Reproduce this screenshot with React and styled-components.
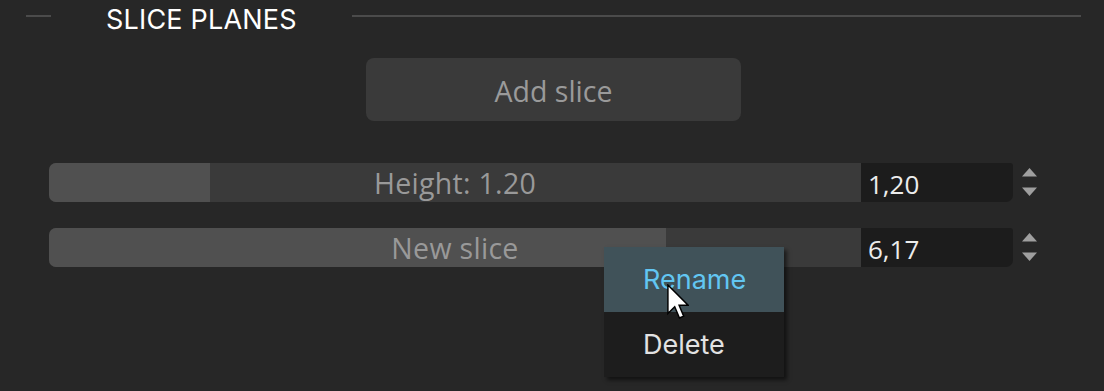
import React from 'react'
import styled, { createGlobalStyle } from 'styled-components';

const GlobalStyle = createGlobalStyle`
    body {
        margin: 0;
        background-color: #272727;
        font-family: "Open Sans", "Liberation Sans", sans-serif;
    }
`

const sliders = [
    { label: 'Height: 1.20', value: '1,20', fill: 161 },
    { label: 'New slice', value: '6,17', fill: 617 },
];

const App = () => {
    return (
        <Page>
            <GlobalStyle />
            <Header>
                <ShortLine />
                <Title>SLICE PLANES</Title>
                <LongLine />
            </Header>
            <ButtonRow>
                <AddButton>Add slice</AddButton>
            </ButtonRow>
            <SliderList>
                {sliders.map((s, i) => (
                    <SliderRow key={i}>
                        <Track>
                            <Fill style={{ width: s.fill }} />
                            <TrackLabel>{s.label}</TrackLabel>
                        </Track>
                        <NumberBox>{s.value}</NumberBox>
                        <Spinner>
                            <svg width="15" height="29" viewBox="0 0 15 29">
                                <polygon points="7.5,0 15,8.5 0,8.5" fill="#9f9f9f" />
                                <polygon points="0,19.5 15,19.5 7.5,28" fill="#9f9f9f" />
                            </svg>
                        </Spinner>
                    </SliderRow>
                ))}
            </SliderList>
            <Menu>
                <MenuItem $active>Rename</MenuItem>
                <MenuItem>Delete</MenuItem>
            </Menu>
            <Cursor width="22" height="35" viewBox="0 0 12 19">
                <path d="M0.5,0.5 L0.5,16 L4.2,12.4 L6.8,18.5 L9.1,17.5 L6.6,11.5 L11.5,11.5 Z"
                    fill="#ffffff" stroke="#000000" strokeWidth="0.8" strokeLinejoin="miter" />
            </Cursor>
        </Page>
    )
}

export default App;


const Page = styled.div`
    position: relative;
    width: 1104px;
    height: 391px;
    overflow: hidden;
    background-color: #272727;
`

const Header = styled.div`
    display: flex;
    align-items: flex-start;
    padding: 0 23px 0 26px;
    height: 40px;
`

const ShortLine = styled.div`
    width: 25px;
    height: 2px;
    margin-top: 15px;
    background-color: #4b4b4b;
`

const LongLine = styled(ShortLine)`
    flex: 1;
    width: auto;
`

const Title = styled.div`
    font-family: Inter, "Liberation Sans", sans-serif;
    font-size: 27px;
    line-height: 32px;
    color: #ffffff;
    margin: 4px 55px 0 55px;
    letter-spacing: 0.2px;
`

const ButtonRow = styled.div`
    display: flex;
    justify-content: center;
    padding-top: 18px;
    padding-left: 3px;
`

const AddButton = styled.div`
    width: 375px;
    height: 63px;
    border-radius: 8px;
    background-color: #3a3a3a;
    color: #9a9a9a;
    font-size: 28.5px;
    display: flex;
    align-items: center;
    justify-content: center;
    padding-top: 2px;
    box-sizing: border-box;
`

const SliderList = styled.div`
    display: flex;
    flex-direction: column;
    gap: 26px;
    padding: 42px 0 0 49px;
`

const SliderRow = styled.div`
    display: flex;
    align-items: center;
    height: 39px;
`

const Track = styled.div`
    position: relative;
    width: 812px;
    height: 100%;
    background-color: #3a3a3a;
    border-radius: 7px 0 0 7px;
    overflow: hidden;
    display: flex;
    align-items: center;
    justify-content: center;
`

const Fill = styled.div`
    position: absolute;
    left: 0;
    top: 0;
    bottom: 0;
    background-color: #505050;
`

const TrackLabel = styled.span`
    position: relative;
    color: #999999;
    font-size: 28.5px;
    letter-spacing: 0.3px;
    margin-top: 1px;
`

const NumberBox = styled.div`
    width: 152px;
    height: 100%;
    padding: 2px 0 0 7px;
    box-sizing: border-box;
    background-color: #1c1c1c;
    border-radius: 0 3px 7px 0;
    color: #ececec;
    font-size: 26px;
    display: flex;
    align-items: center;
`

const Spinner = styled.div`
    margin-left: 9px;
    display: flex;
    align-items: center;
`

const Menu = styled.div`
    position: absolute;
    left: 604px;
    top: 247px;
    width: 180px;
    background-color: #1d1d1d;
    box-shadow: 3px 3px 4px rgba(0, 0, 0, 0.55);
    font-family: Inter, "Liberation Sans", sans-serif;
`

const MenuItem = styled.div`
    height: 65px;
    padding-left: 39px;
    display: flex;
    align-items: center;
    font-size: 27px;
    color: ${p => p.$active ? '#62c6f2' : '#e2e2e2'};
    background-color: ${p => p.$active ? '#405259' : 'transparent'};
`

const Cursor = styled.svg`
    position: absolute;
    left: 667px;
    top: 284px;
`
